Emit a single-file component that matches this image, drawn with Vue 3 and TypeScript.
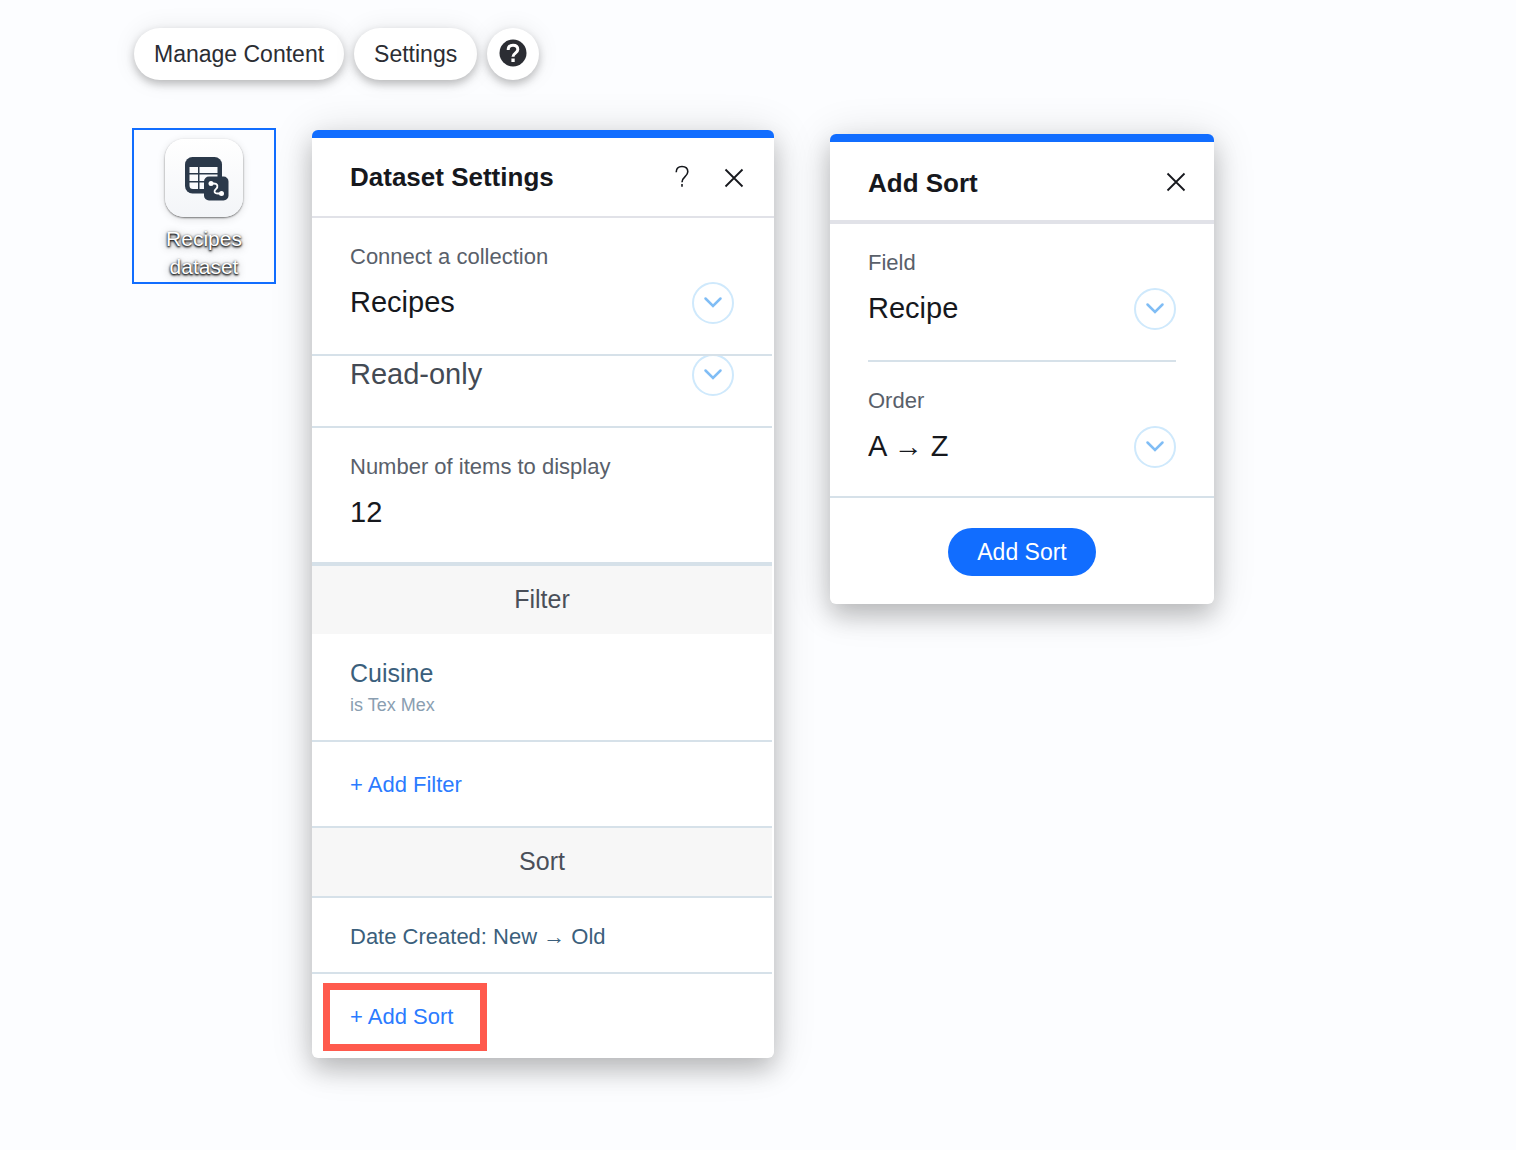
<script setup lang="ts">
import { ref } from 'vue'

const collection = ref('Recipes')
const mode = ref('Read-only')
const itemCount = ref('12')
const sortField = ref('Recipe')
const sortOrder = ref('A → Z')
</script>

<template>
  <main class="page">
    <nav class="toolbar" aria-label="Dataset actions">
      <button type="button" class="pill">Manage Content</button>
      <button type="button" class="pill">Settings</button>
      <button type="button" class="pill round" aria-label="Help">
        <svg width="28" height="28" viewBox="0 0 28 28" aria-hidden="true">
          <circle cx="14" cy="14" r="13.5" fill="#2b2d33" />
          <path d="M9.2 11c0-2.900 1.900-4.700 4.800-4.700s4.800 1.700 4.800 4.300c0 3.500-4.800 3.600-4.800 7.100" fill="none" stroke="#fff" stroke-width="3" />
          <rect x="12.400" y="19.500" width="3.300" height="3.500" fill="#fff" />
        </svg>
      </button>
    </nav>

    <div class="workspace">
      <button type="button" class="dataset">
        <span class="tile">
          <svg width="44" height="44" viewBox="0 0 44 44" aria-hidden="true">
            <rect x="0" y="0" width="37" height="36.500" rx="7.500" fill="#2b394a" />
            <path d="M4.500 10h8.500v6H4.500zM14.500 10H32.500v6H14.500zM4.500 17.500h8.500v6.500H4.500zM14.500 17.500H32.500v6.500H14.500zM4.500 25.500h8.500v6.500H8a3.500 3.500 0 0 1-3.500-3.500zM14.500 25.500H32.500v6.500H14.500z" fill="#fafbfd" />
            <rect x="19" y="19.500" width="24.500" height="24" rx="5" fill="#2b394a" />
            <path d="M26 26.500h2.500c5 0 4.500 4 2.500 5.500s-2.500 4.500 2 4.500h3" fill="none" stroke="#fff" stroke-width="1.800" />
            <circle cx="26" cy="26.500" r="2.500" fill="#fff" />
            <circle cx="36.500" cy="36.500" r="2.500" fill="#fff" />
          </svg>
        </span>
        <span class="dataset-name">Recipes dataset</span>
      </button>

      <section class="panel settings" aria-labelledby="settings-title">
        <header class="head">
          <h2 id="settings-title">Dataset Settings</h2>
          <button type="button" class="icon" aria-label="Help">
            <svg width="32" height="32" viewBox="0 0 32 32" fill="none" stroke="#16181d" stroke-width="1.600" aria-hidden="true">
              <path d="M10.200 11.200c0-3.500 2.200-5.700 5.800-5.700s5.800 2.100 5.800 5.300c0 4.800-5.800 4.900-5.800 10.400M16 23v2.800" />
            </svg>
          </button>
          <button type="button" class="icon" aria-label="Close">
            <svg width="32" height="32" viewBox="0 0 32 32" fill="none" stroke="#16181d" stroke-width="1.800" aria-hidden="true">
              <path d="M7.500 8.500l17 17M24.500 8.500l-17 17" />
            </svg>
          </button>
        </header>

        <div class="body">
          <div class="field ruled">
            <label for="collection">Connect a collection</label>
            <div class="select">
              <select id="collection" v-model="collection"><option>Recipes</option></select>
              <svg class="chevron" viewBox="0 0 42 42" aria-hidden="true"><circle cx="21" cy="21" r="20" /><path d="M13.500 16.500l7.500 7.500 7.500-7.500" stroke-width="2.500" /></svg>
            </div>
          </div>
          <div class="field scrolled ruled">
            <div class="select">
              <select v-model="mode" aria-label="Mode"><option>Read-only</option></select>
              <svg class="chevron" viewBox="0 0 42 42" aria-hidden="true"><circle cx="21" cy="21" r="20" /><path d="M13.500 16.500l7.500 7.500 7.500-7.500" stroke-width="2.500" /></svg>
            </div>
          </div>
          <div class="field short">
            <label for="count">Number of items to display</label>
            <input id="count" v-model="itemCount" type="text" inputmode="numeric" />
          </div>

          <h3 class="filter-title">Filter</h3>
          <div class="rule-item ruled">
            <span class="rule-name">Cuisine</span>
            <span class="rule-value">is Tex Mex</span>
          </div>
          <div class="action ruled">
            <button type="button" class="add">+ Add Filter</button>
          </div>

          <h3 class="ruled">Sort</h3>
          <div class="sort-item ruled">Date Created: New → Old</div>
          <div class="action marked">
            <button type="button" class="add highlight">+ Add Sort</button>
          </div>
        </div>
      </section>

      <section class="panel sorting" aria-labelledby="sort-title">
        <header class="head">
          <h2 id="sort-title">Add Sort</h2>
          <button type="button" class="icon" aria-label="Close">
            <svg width="32" height="32" viewBox="0 0 32 32" fill="none" stroke="#16181d" stroke-width="1.800" aria-hidden="true">
              <path d="M7.500 6.500l17 17M24.500 6.500l-17 17" />
            </svg>
          </button>
        </header>
        <div class="inset ruled">
          <div class="field">
            <label for="sort-field">Field</label>
            <div class="select">
              <select id="sort-field" v-model="sortField"><option>Recipe</option></select>
              <svg class="chevron" viewBox="0 0 42 42" aria-hidden="true"><circle cx="21" cy="21" r="20" /><path d="M13.500 16.500l7.500 7.500 7.500-7.500" stroke-width="2.500" /></svg>
            </div>
          </div>
        </div>
        <div class="field short ruled">
          <label for="sort-order">Order</label>
          <div class="select">
            <select id="sort-order" v-model="sortOrder"><option>A → Z</option></select>
            <svg class="chevron" viewBox="0 0 42 42" aria-hidden="true"><circle cx="21" cy="21" r="20" /><path d="M13.500 16.500l7.500 7.500 7.500-7.500" stroke-width="2.500" /></svg>
          </div>
        </div>
        <footer>
          <button type="button" class="primary">Add Sort</button>
        </footer>
      </section>
    </div>
  </main>
</template>

<style>
body {
  margin: 0;
  background: #fcfdff;
}
</style>

<style scoped>
.page,
.page * {
  box-sizing: border-box;
}

.page {
  min-height: 100vh;
  padding: 28px 132px 92px;
  font-family: "Liberation Sans", Arial, sans-serif;
  color: #16181d;
}

button,
input,
select {
  margin: 0;
  padding: 0;
  border: 0;
  background: none;
  font-family: inherit;
  color: inherit;
}

button,
select {
  cursor: pointer;
}

.toolbar {
  display: flex;
  gap: 10px;
  padding-left: 2px;
}

.pill {
  height: 52px;
  padding: 0 20px;
  border-radius: 26px;
  background: #fff;
  box-shadow: 0 4px 8px rgba(0, 0, 0, 0.24), 0 0 24px rgba(0, 0, 0, 0.08);
  font-size: 23px;
  color: #2b2d33;
}

.round {
  display: grid;
  place-items: center;
  width: 52px;
  padding: 0 0 3px;
}

.workspace {
  display: flex;
  align-items: flex-start;
  margin-top: 48px;
}

.dataset {
  display: flex;
  flex: none;
  flex-direction: column;
  align-items: center;
  width: 144px;
  padding: 9px 24px 1px;
  border: 2px solid #116dff;
}

.tile {
  display: grid;
  place-items: center;
  width: 78px;
  height: 78px;
  padding: 2px 0 0 6px;
  border-radius: 19px;
  background: linear-gradient(#fff, #f3f5f8);
  box-shadow: 0 1px 2px rgba(0, 0, 0, 0.5), 0 2px 8px rgba(0, 0, 0, 0.12);
}

.dataset-name {
  margin-top: 8px;
  font-size: 21px;
  line-height: 28px;
  color: #fff;
  text-shadow: 0 1px 2px #000, 0 1px 3px rgba(0, 0, 0, 0.8), 0 2px 8px rgba(0, 0, 0, 0.4);
}

.panel {
  border-top: 8px solid #116dff;
  border-radius: 6px;
  background: #fff;
  box-shadow: 0 12px 24px rgba(0, 0, 0, 0.2), 0 4px 44px rgba(0, 0, 0, 0.14);
}

.settings {
  flex: 0 1 462px;
  margin: 2px 0 0 36px;
}

.sorting {
  flex: 0 1 384px;
  margin: 6px 0 0 56px;
}

.head {
  display: flex;
  align-items: center;
  gap: 20px;
  height: 80px;
  padding: 0 24px 0 38px;
  border-bottom: 2px solid #e1e2e8;
}

.sorting .head {
  height: 82px;
  padding: 4px 22px 0 38px;
  border-bottom-width: 4px;
}

h2 {
  flex: 1;
  margin: 0;
  font-size: 26px;
  line-height: 30px;
}

.icon,
.icon svg {
  display: block;
  width: 32px;
  height: 32px;
}

.body {
  margin-right: 2px;
}

.ruled {
  border-bottom: 2px solid #d6e1e9;
}

.field {
  display: flex;
  flex-direction: column;
  gap: 11px;
  padding: 25px 38px 30px;
}

.short {
  padding-bottom: 28px;
}

.inset {
  margin: 0 38px;
}

.inset .field {
  padding-right: 0;
  padding-left: 0;
}

.scrolled {
  height: 72px;
  padding-top: 0;
  overflow: hidden;
  color: #434a54;
}

.scrolled .select {
  margin-top: -2px;
}

label {
  font-size: 22px;
  line-height: 28px;
  color: #59606a;
}

.select {
  display: grid;
  height: 42px;
}

.select select,
.chevron {
  grid-area: 1 / 1;
}

select {
  width: 100%;
  height: 40px;
  appearance: none;
  font-size: 29px;
}

input {
  width: 100%;
  height: 42px;
  padding-bottom: 2px;
  font-size: 29px;
}

.chevron {
  justify-self: end;
  width: 42px;
  height: 42px;
  pointer-events: none;
  fill: none;
  stroke: #cfe9fc;
  stroke-width: 2;
}

.chevron path {
  stroke: #80bdf5;
  stroke-linecap: round;
}

h3 {
  height: 70px;
  margin: 0;
  background: #f7f7f7;
  font-size: 25px;
  font-weight: 400;
  line-height: 66px;
  text-align: center;
  color: #4a4f59;
}

.filter-title {
  height: 72px;
  border-top: 4px solid #d6e1e9;
}

.rule-item {
  display: flex;
  flex-direction: column;
  gap: 5px;
  padding: 24px 38px 23px;
}

.rule-name {
  font-size: 25px;
  line-height: 30px;
  color: #3b5f7c;
}

.rule-value {
  font-size: 18px;
  line-height: 24px;
  color: #8a9eb1;
}

.action {
  display: flex;
  align-items: center;
  height: 86px;
  padding: 2px 38px 0;
}

.add {
  font-size: 22px;
  line-height: 28px;
  color: #2b7bff;
}

.sort-item {
  padding: 25px 38px 21px;
  font-size: 22px;
  line-height: 28px;
  color: #3b5f7c;
}

.marked {
  height: 84px;
  padding: 2px 11px 0;
}

.highlight {
  height: 68px;
  padding: 0 27px 0 20px;
  border: 7px solid #ff5a4d;
}

footer {
  display: flex;
  justify-content: center;
  padding: 30px 0 28px;
}

.primary {
  height: 48px;
  padding: 0 29px;
  border-radius: 24px;
  background: #116dff;
  font-size: 23px;
  color: #fff;
}
</style>
